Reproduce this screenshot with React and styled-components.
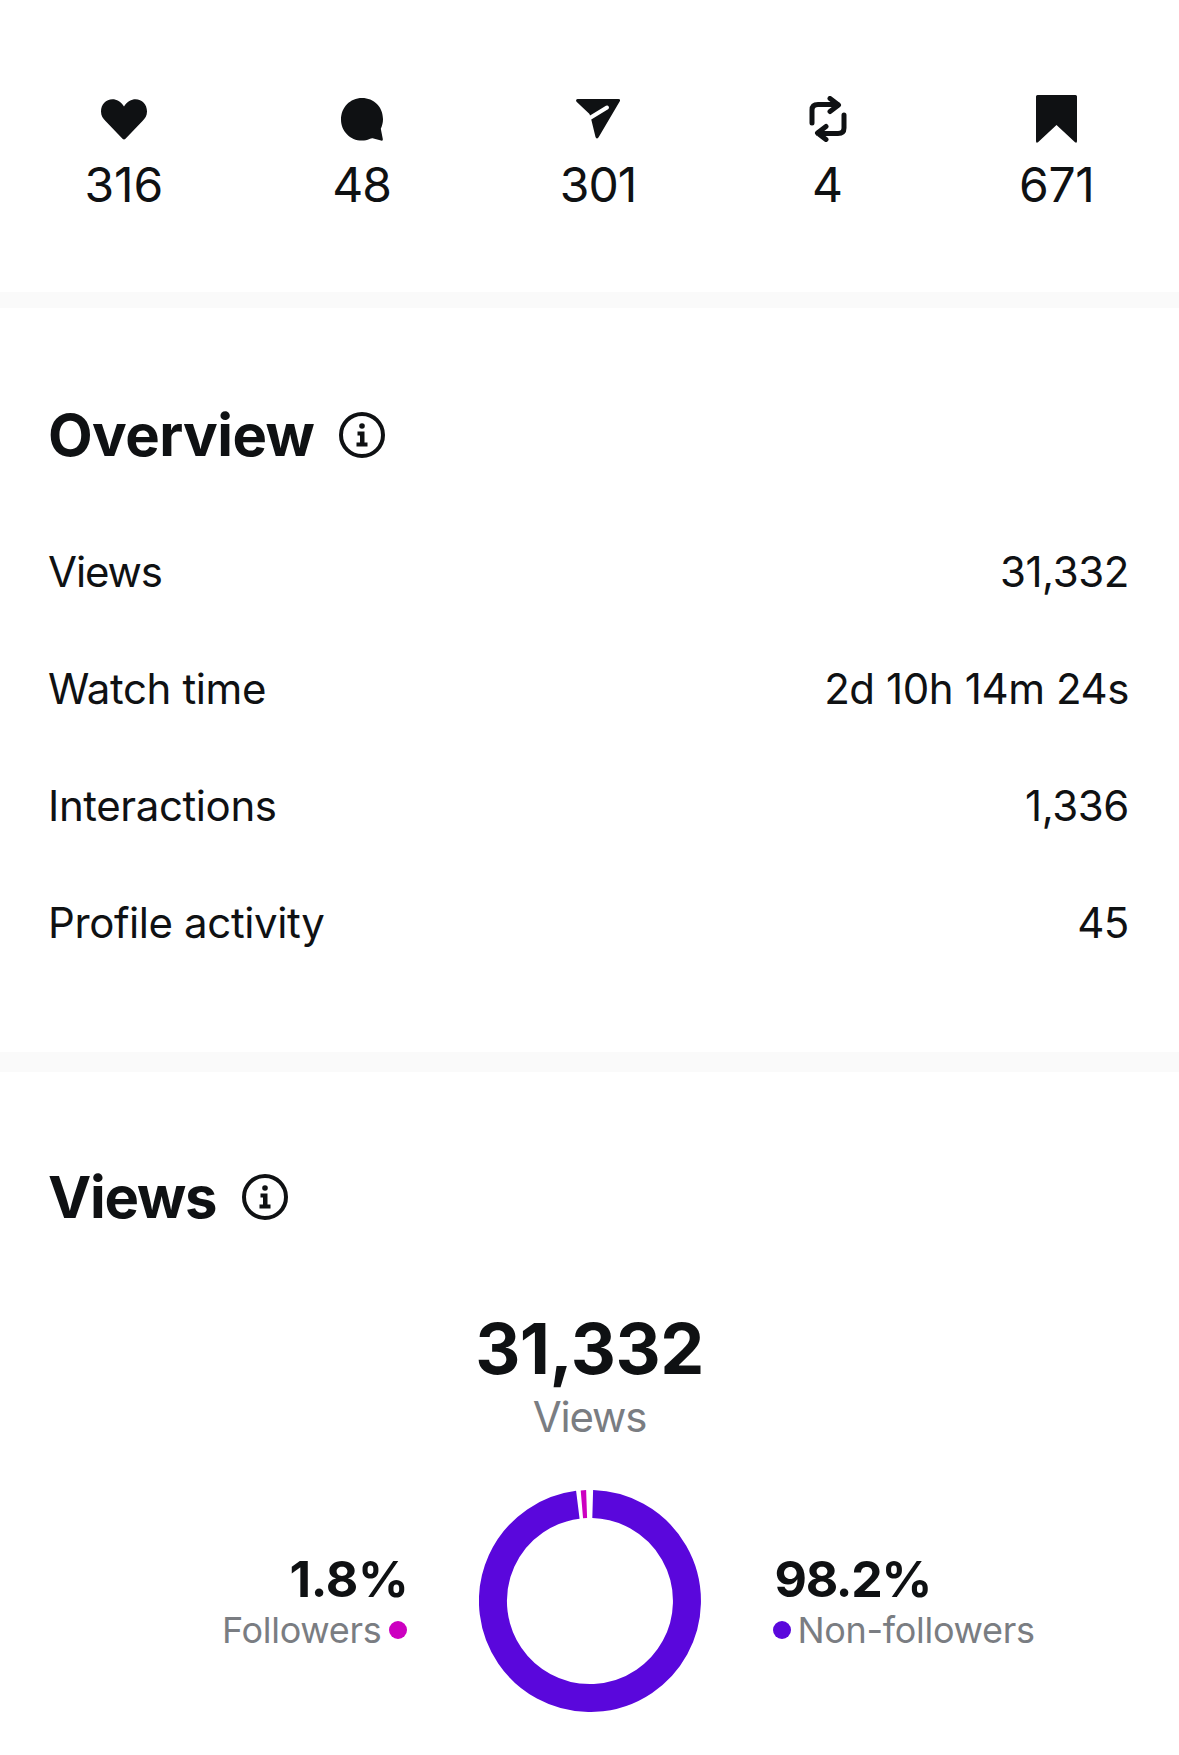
import React from "react";
import styled, { createGlobalStyle } from "styled-components";

const Global = createGlobalStyle`
  html, body { margin: 0; padding: 0; background: #fff; }
  body { font-family: Inter, "Liberation Sans", sans-serif; color: #0f1113; }
`;
const Page = styled.main`
  width: 1179px;
  min-height: 1755px;
  background: #fff;
  overflow: hidden;
`;
const StatsRow = styled.section`
  display: flex;
  justify-content: space-around;
  padding: 95px 0 83px;
`;
const Stat = styled.div`
  display: flex;
  flex-direction: column;
  align-items: center;
  min-width: 45px;
`;
const StatIcon = styled.div`
  height: 48px;
  display: flex;
  align-items: center;
  justify-content: center;
  margin-bottom: 18px;
`;
const StatValue = styled.div`
  font-size: 48px;
  line-height: 48px;
  letter-spacing: ${(p) => p.$ls || 0}px;
  font-weight: 400;
`;
const Divider = styled.div`
  height: ${(p) => p.$h}px;
  background: #fafafa;
`;
const Section = styled.section`
  padding: ${(p) => p.$pad};
`;
const Heading = styled.h2`
  display: flex;
  align-items: center;
  gap: ${(p) => p.$gap}px;
  margin: 0;
  font-size: 58px;
  line-height: 58px;
  font-weight: 700;
  letter-spacing: ${(p) => p.$ls}px;
`;
const Rows = styled.div`
  display: flex;
  flex-direction: column;
  gap: 67px;
  margin-top: 83px;
`;
const Row = styled.div`
  display: flex;
  justify-content: space-between;
  font-size: 42px;
  line-height: 50px;
  font-weight: 400;
  letter-spacing: -0.4px;
`;
const RowLabel = styled.span`
  letter-spacing: ${(p) => p.$ls}px;
`;
const Centered = styled.div`
  margin: 0 -50px 0 -48px;
`;
const Total = styled.div`
  margin-top: 88px;
  text-align: center;
  font-size: 70px;
  line-height: 70px;
  font-weight: 700;
  letter-spacing: -0.5px;
`;
const TotalLabel = styled.div`
  margin-top: 8px;
  text-align: center;
  font-size: 42px;
  line-height: 50px;
  letter-spacing: -1.2px;
  color: #7a7d82;
`;
const Chart = styled.div`
  display: grid;
  grid-template-columns: 1fr 222px 1fr;
  column-gap: 72px;
  align-items: center;
  margin-top: 48px;
`;
const Legend = styled.div`
  display: flex;
  flex-direction: column;
  align-items: ${(p) => (p.$right ? "flex-start" : "flex-end")};
`;
const Pct = styled.div`
  font-size: 50px;
  line-height: 56px;
  font-weight: 700;
  letter-spacing: ${(p) => (p.$right ? "-1.3px" : "-0.3px")};
  padding: ${(p) => (p.$right ? "0 0 0 2px" : "0 0 0 0")};
  margin-right: ${(p) => (p.$right ? "0" : "-2px")};
`;
const LegendLabel = styled.div`
  display: flex;
  align-items: center;
  gap: 7px;
  margin-top: 1px;
  font-size: 36px;
  line-height: 44px;
  letter-spacing: -0.3px;
  color: #7a7d82;
`;
const Dot = styled.span`
  width: 18px;
  height: 18px;
  border-radius: 50%;
  background: ${(p) => p.$color};
`;

const INK = "#0f1113";
const Heart = () => (
  <svg width="46" height="41" viewBox="0 0 46 41" fill={INK}>
    <path d="M23 7.5C20 2.5 15.5.3 11.5.3 5 .3 0 5.5 0 12.5c0 4.5 2 7 4.5 9.5l17 17.8q1.5 1.2 3 0L41.500 22c2.500-2.500 4.500-5 4.500-9.500C46 5.500 41 .3 34.500.3 30.500.3 26 2.500 23 7.500Z" />
  </svg>
);
const Bubble = () => (
  <svg width="42" height="43" viewBox="0 0 42 43" fill={INK}>
    <path d="M21 0C33 0 42 9 42 21c0 3.600-.8 6.800-2.200 9.800L41.800 41q.3 2-1.800 1.600L32.500 40.500c-1.500-.4-2.500-.1-4 .6-2.300 1-4.700 1.500-7.500 1.500C9 42.600 0 33 0 21.500 0 9.500 9 0 21 0Z" />
  </svg>
);
const Send = () => (
  <svg width="44" height="40" viewBox="0 0 44 40">
    <path fill={INK} d="M1.500 0H42.500Q45 0 43.800 2.300L22.600 38.300Q20.500 40.800 19.500 38L15.500 21.500 13.500 15 .8 3Q-1 .8 1.500 0Z" />
    <path d="M13 19.500 31 8.500" stroke="#fff" strokeWidth="4" strokeLinecap="round" fill="none" />
  </svg>
);
const Repost = () => (
  <svg width="38" height="46" viewBox="0 0 38 46" fill="none" stroke={INK} strokeWidth="5" strokeLinecap="round" strokeLinejoin="round">
    <path d="M3 27V14Q3 8.500 9 8.500H29M21 2.500 29.500 9 21 15.500" />
    <path d="M35 19V32Q35 37.500 29 37.500H9M17 43.500 8.500 37 17 30.500" />
  </svg>
);
const Bookmark = () => (
  <svg width="41" height="48" viewBox="0 0 41 48" fill={INK}>
    <path d="M1.500 0H39.500Q41 0 41 1.500V46Q41 48.500 39 47.300L20.500 30 2 47.300Q0 48.500 0 46V1.500Q0 0 1.500 0Z" />
  </svg>
);
const Info = () => (
  <svg width="46" height="46" viewBox="0 0 46 46" fill={INK}>
    <circle cx="23" cy="23" r="21" fill="none" stroke={INK} strokeWidth="4" />
    <circle cx="23" cy="14" r="2.800" />
    <path d="M18.500 19.500H25.500V30.500H28.500V34.500H17.500V30.500H21V23.500H18.500Z" />
  </svg>
);

const polar = (r, deg) => {
  const a = ((deg - 90) * Math.PI) / 180;
  return `${(111 + r * Math.cos(a)).toFixed(2)} ${(111 + r * Math.sin(a)).toFixed(2)}`;
};
const arc = (from, to) => {
  const large = to - from > 180 ? 1 : 0;
  return `M${polar(97, from)}A97 97 0 ${large} 1 ${polar(97, to)}`;
};
const Donut = () => (
  <svg width="222" height="222" viewBox="0 0 222 222" fill="none" strokeWidth="28">
    <path d={arc(1.6, 352.8)} stroke="#5a07dc" />
    <path d={arc(355.2, 358)} stroke="#cc00c0" />
  </svg>
);

const stats = [
  { icon: <Heart />, value: "316", ls: 0 },
  { icon: <Bubble />, value: "48", ls: -1 },
  { icon: <Send />, value: "301", ls: -1 },
  { icon: <Repost />, value: "4", ls: 0 },
  { icon: <Bookmark />, value: "671", ls: -0.3 },
];
const rows = [
  ["Views", "31,332", -1.1],
  ["Watch time", "2d 10h 14m 24s", -0.4],
  ["Interactions", "1,336", -0.4],
  ["Profile activity", "45", -0.4],
];

export default function App() {
  return (
    <Page>
      <Global />
      <StatsRow>
        {stats.map((s) => (
          <Stat key={s.value}>
            <StatIcon>{s.icon}</StatIcon>
            <StatValue $ls={s.ls}>{s.value}</StatValue>
          </Stat>
        ))}
      </StatsRow>
      <Divider $h={16} />
      <Section $pad="98px 50px 104px 48px">
        <Heading $gap={25} $ls={-0.6}>
          Overview <Info />
        </Heading>
        <Rows>
          {rows.map(([k, v, ls]) => (
            <Row key={k}>
              <RowLabel $ls={ls}>{k}</RowLabel>
              <span>{v}</span>
            </Row>
          ))}
        </Rows>
      </Section>
      <Divider $h={20} />
      <Section $pad="96px 50px 0 48px">
        <Heading $gap={26} $ls={-1.3}>
          Views <Info />
        </Heading>
        <Centered>
          <Total>31,332</Total>
          <TotalLabel>Views</TotalLabel>
          <Chart>
            <Legend>
              <Pct>1.8%</Pct>
              <LegendLabel>
                Followers <Dot $color="#cc00c0" />
              </LegendLabel>
            </Legend>
            <Donut />
            <Legend $right>
              <Pct $right>98.2%</Pct>
              <LegendLabel>
                <Dot $color="#5a07dc" /> Non-followers
              </LegendLabel>
            </Legend>
          </Chart>
        </Centered>
      </Section>
    </Page>
  );
}
